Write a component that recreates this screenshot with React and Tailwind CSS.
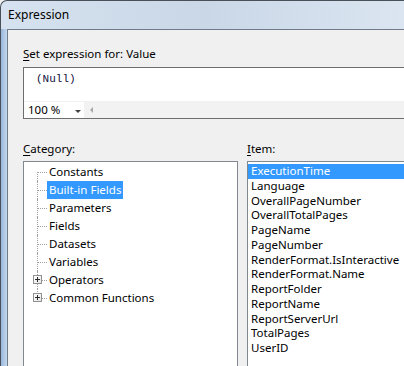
import React from 'react';

const CATEGORIES = [
  { label: 'Constants' },
  { label: 'Built-in Fields', selected: true },
  { label: 'Parameters' },
  { label: 'Fields' },
  { label: 'Datasets' },
  { label: 'Variables' },
  { label: 'Operators', expandable: true },
  { label: 'Common Functions', expandable: true },
];

const ITEMS = [
  'ExecutionTime',
  'Language',
  'OverallPageNumber',
  'OverallTotalPages',
  'PageName',
  'PageNumber',
  'RenderFormat.IsInteractive',
  'RenderFormat.Name',
  'ReportFolder',
  'ReportName',
  'ReportServerUrl',
  'TotalPages',
  'UserID',
];

function ExpandBox() {
  return (
    <div className="absolute left-[9px] top-[4px] w-[9px] h-[9px] border border-[#919191] bg-gradient-to-br from-white to-[#e6e6e6] flex items-center justify-center">
      <div className="relative w-[5px] h-[5px]">
        <div className="absolute left-0 top-[2px] w-[5px] h-[1px] bg-[#2a2a2a]" />
        <div className="absolute left-[2px] top-0 w-[1px] h-[5px] bg-[#2a2a2a]" />
      </div>
    </div>
  );
}

function TreeRow({ item, first, last }) {
  return (
    <div className="flex h-[18px] items-center">
      {/* tree line gutter */}
      <div className="relative w-[23px] h-[18px] shrink-0">
        <div
          className={`absolute left-[13px] w-0 border-l border-dotted border-[#a0a0a0] ${
            first ? 'top-[9px] bottom-0' : last ? 'top-0 h-[9px]' : 'top-0 bottom-0'
          }`}
        />
        <div className="absolute left-[14px] top-[9px] w-[9px] h-0 border-t border-dotted border-[#a0a0a0]" />
        {item.expandable && <ExpandBox />}
      </div>
      <div
        className={`h-[18px] px-[2px] leading-[18px] ${
          item.selected ? 'bg-[#3399ff] text-white' : 'text-black'
        }`}
      >
        {item.label}
      </div>
    </div>
  );
}

export default function App() {
  return (
    <div className="w-[404px] h-[366px] overflow-hidden bg-[#f0f0f0] font-['Noto_Sans',sans-serif] text-[11.5px] text-black">
      <div className="h-full rounded-tl-[7px] border-l border-t border-[#48505a] bg-gradient-to-r from-[#d6e2ef] via-[#c9d7e7] to-[#dbe5f1] flex flex-col">
        {/* title bar */}
        <div className="h-[28px] shrink-0 pl-[7px] pt-[6px] text-[12px] leading-[16px] text-black">
          Expression
        </div>
        <div className="flex flex-1 min-h-0">
          <div className="w-[6px] shrink-0 bg-gradient-to-r from-[#9ab8dd] to-[#c4d7ee]" />
          <div className="flex-1 min-w-0 bg-[#f0f0f0] border-l border-t border-[#6f7b88] pl-[15px] pt-[16px] flex flex-col">
            <div className="h-[16px] leading-[16px]">
              <span className="underline underline-offset-2">S</span>et expression for: Value
            </div>
            {/* expression editor */}
            <div className="mt-[5px] h-[52px] border border-r-0 border-[#6e6e6e] bg-white flex flex-col">
              <div className="flex-1 pl-[12px] pt-[4px] font-['Liberation_Mono',monospace] text-[11px] leading-[14px] text-[#10103a]">
                (Null)
              </div>
              <div className="h-[17px] bg-[#f2f2f2] flex items-center">
                <div className="w-[60px] h-[16px] bg-white flex items-center pl-[4px] relative">
                  <span className="leading-[16px]">100 %</span>
                  <span className="absolute left-[51px] top-[8px] w-0 h-0 border-l-[3px] border-r-[3px] border-t-[3px] border-l-transparent border-r-transparent border-t-[#404040]" />
                </div>
                <span className="ml-[6px] w-0 h-0 border-t-[3px] border-b-[3px] border-r-[3px] border-t-transparent border-b-transparent border-r-[#a8a8a8]" />
              </div>
            </div>
            {/* lists */}
            <div className="mt-[22px] flex gap-[9px] flex-1 min-h-0">
              <div className="w-[215px] shrink-0 flex flex-col">
                <div className="h-[16px] leading-[16px]">
                  <span className="underline underline-offset-2">C</span>ategory:
                </div>
                <div className="mt-[4px] flex-1 border border-b-0 border-[#828790] bg-white pt-[1px]">
                  {CATEGORIES.map((c, i) => (
                    <TreeRow key={c.label} item={c} first={i === 0} last={i === CATEGORIES.length - 1} />
                  ))}
                </div>
              </div>
              <div className="flex-1 min-w-0 flex flex-col">
                <div className="h-[16px] leading-[16px]">
                  <span className="underline underline-offset-2">I</span>tem:
                </div>
                <div className="mt-[4px] flex-1 border border-r-0 border-b-0 border-[#828790] bg-white pt-[2px]">
                  {ITEMS.map((it, i) => (
                    <div
                      key={it}
                      className={`h-[14.75px] pl-[3px] leading-[14.75px] whitespace-nowrap ${
                        i === 0 ? 'bg-[#3399ff] text-white' : 'text-black'
                      }`}
                    >
                      {it}
                    </div>
                  ))}
                </div>
              </div>
            </div>
          </div>
        </div>
      </div>
    </div>
  );
}
